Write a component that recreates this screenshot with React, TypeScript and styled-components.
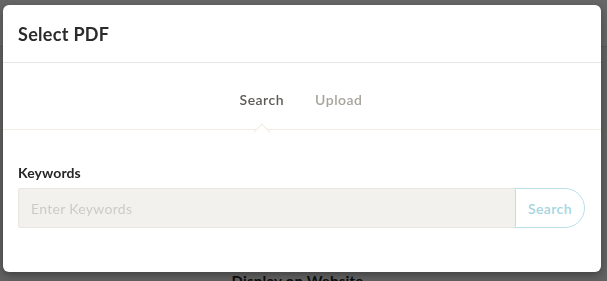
import React from "react";
import styled, { createGlobalStyle } from "styled-components";

const Global = createGlobalStyle`
  html, body { margin: 0; padding: 0; }
  body {
    font-family: "Lato", "Noto Sans", sans-serif;
    width: 607px;
    height: 281px;
    overflow: hidden;
    background: #f3f3f3;
  }
  * { box-sizing: border-box; }
`;

const Page = styled.div`
  width: 607px;
  height: 281px;
  display: flex;
  flex-direction: column;
  overflow: hidden;
`;

const PageHeader = styled.div`
  flex-shrink: 0;
  height: 47px;
  background: #ffffff;
  border-bottom: 1px solid #dcdcdc;
`;

const PageBody = styled.div`
  flex: 1;
  min-height: 0;
  display: flex;
  justify-content: center;
  align-items: flex-start;
  padding-top: 224px;
  padding-right: 12px;
`;

const PageText = styled.span`
  flex-shrink: 0;
  font-size: 15px;
  font-weight: 700;
  color: #222;
  letter-spacing: 0.2px;
  line-height: 20px;
`;

const Overlay = styled.div`
  position: fixed;
  inset: 0;
  background: rgba(0, 0, 0, 0.6);
  padding: 5px 6px 0 3px;
`;

const Modal = styled.div`
  width: 598px;
  height: 267px;
  background: #fff;
  border-radius: 6px;
  box-shadow: 0 3px 8px rgba(0, 0, 0, 0.35);
  display: flex;
  flex-direction: column;
`;

const ModalHeader = styled.div`
  height: 58px;
  padding: 0 15px;
  display: flex;
  align-items: center;
  border-bottom: 1px solid #e6e6e6;
`;

const Title = styled.h2`
  margin: 0;
  font-size: 18px;
  font-weight: 700;
  letter-spacing: 0.3px;
  color: #2b2b2b;
`;

const Tabs = styled.div`
  height: 67px;
  display: flex;
  justify-content: center;
  align-items: center;
  gap: 31px;
  border-bottom: 1px solid #f1ece4;
  padding-right: 2px;
  padding-top: 4px;
`;

const Tab = styled.button<{ $active?: boolean }>`
  position: relative;
  background: none;
  border: none;
  padding: 0;
  font-family: inherit;
  font-size: 14px;
  font-weight: 600;
  letter-spacing: 0.5px;
  color: ${(p) => (p.$active ? "#5d5b57" : "#a8a49c")};
  cursor: pointer;
  height: 100%;

  ${(p) =>
    p.$active &&
    `
    &::after {
      content: "";
      position: absolute;
      left: 50%;
      bottom: -7px;
      width: 11px;
      height: 11px;
      background: #fff;
      border-left: 1px solid #f1ece4;
      border-top: 1px solid #f1ece4;
      transform: translateX(-50%) rotate(45deg);
    }
  `}
`;

const TabLabel = styled.span`
  display: inline-block;
  padding-top: 2px;
`;

const TabSlot = styled.div`
  height: 66px;
  display: flex;
  align-items: center;
`;

const Body = styled.div`
  padding: 34px 15px 0;
  display: flex;
  flex-direction: column;
  gap: 7px;
`;

const Label = styled.label`
  font-size: 14px;
  font-weight: 700;
  letter-spacing: 0.1px;
  color: #262626;
`;

const InputRow = styled.div`
  display: flex;
  height: 40px;
  width: 567px;
`;

const Input = styled.input`
  flex: 1;
  min-width: 0;
  height: 100%;
  background: #f2f1ee;
  border: 1px solid #e8e6e1;
  border-right: none;
  border-radius: 3px 0 0 3px;
  padding: 0 12px;
  font-family: inherit;
  font-size: 14px;
  letter-spacing: 0.3px;
  color: #333;
  outline: none;
  &::placeholder { color: #cdcbc6; }
`;

const SearchButton = styled.button`
  width: 70px;
  height: 100%;
  background: #fff;
  border: 1px solid #b9dfe7;
  border-radius: 0 20px 20px 0;
  font-family: inherit;
  font-size: 14px;
  font-weight: 600;
  letter-spacing: 0.4px;
  color: #a6d5df;
  padding: 0;
  cursor: pointer;
`;

export default function App() {
  return (
    <>
      <Global />
      <Page>
        <PageHeader />
        <PageBody>
          <PageText>Display on Website</PageText>
        </PageBody>
      </Page>
      <Overlay>
        <Modal>
          <ModalHeader>
            <Title>Select PDF</Title>
          </ModalHeader>
          <Tabs>
            <TabSlot>
              <Tab $active>
                <TabLabel>Search</TabLabel>
              </Tab>
            </TabSlot>
            <TabSlot>
              <Tab>
                <TabLabel>Upload</TabLabel>
              </Tab>
            </TabSlot>
          </Tabs>
          <Body>
            <Label>Keywords</Label>
            <InputRow>
              <Input placeholder="Enter Keywords" />
              <SearchButton>Search</SearchButton>
            </InputRow>
          </Body>
        </Modal>
      </Overlay>
    </>
  );
}
